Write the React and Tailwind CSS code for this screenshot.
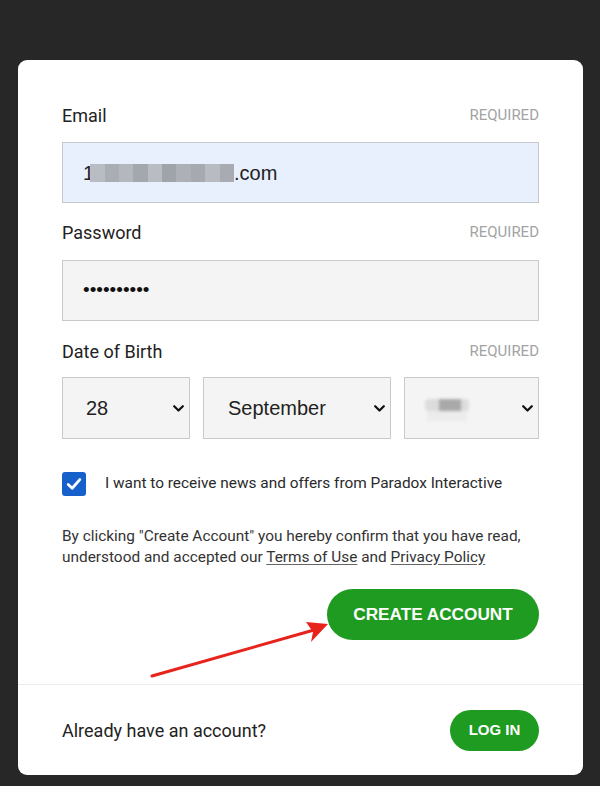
import React from "react";

const Chevron = () => (
  <svg width="11" height="7" viewBox="0 0 11 7" className="shrink-0">
    <path d="M1.2 1.2 L5.5 5.5 L9.8 1.2" fill="none" stroke="#111" strokeWidth="2.2" strokeLinecap="round" strokeLinejoin="round" />
  </svg>
);

function Label({ children }) {
  return (
    <div className="flex h-6 items-center justify-between">
      <span className="text-[18px] text-[#222]">{children}</span>
      <span className="text-[15px] text-[#a3a3a3]">REQUIRED</span>
    </div>
  );
}

export default function App() {
  const blurs = ["#b9bcc2", "#a9adb4", "#b4b7bd", "#a3a7ae", "#b9bcc2", "#9fa3aa", "#adb0b6", "#a6a9b0", "#b8bbc1", "#a8abb1"];
  return (
    <div className="relative min-h-[786px] w-[600px] overflow-hidden bg-[#272727] pt-[60px] font-['Roboto',sans-serif]">
      <div className="ml-[18px] w-[565px] overflow-hidden rounded-[9px] bg-white">
        <div className="px-[44px] pb-[44px] pt-[43px]">
          <Label>Email</Label>
          <div className="mt-[15px] flex h-[61px] items-center border border-[#c6c8cc] bg-[#e8f0fe] pl-[20px] font-['Liberation_Sans',Arial,sans-serif] text-[20px] text-[#222]">
            <span>1</span>
            <span className="-ml-[4px] flex h-[18px] blur-[0.5px]">
              {blurs.map((c, i) => (
                <span key={i} className="h-full w-[14.4px]" style={{ background: c }} />
              ))}
            </span>
            <span>.com</span>
          </div>

          <div className="mt-[17px]">
            <Label>Password</Label>
          </div>
          <div className="mt-[16px] flex h-[61px] items-center border border-[#c9c9c9] bg-[#f4f4f4] pl-[20px] font-['Liberation_Sans',Arial,sans-serif] text-[19px] text-[#111]">
            ••••••••••
          </div>

          <div className="mt-[18px]">
            <Label>Date of Birth</Label>
          </div>
          <div className="mt-[14px] flex h-[62px] gap-[13px] font-['Liberation_Sans',Arial,sans-serif] text-[20px] text-[#222]">
            <div className="flex w-[128px] items-center justify-between border border-[#c9c9c9] bg-[#f4f4f4] pl-[23px] pr-[5px]">
              <span>28</span>
              <Chevron />
            </div>
            <div className="flex w-[188px] items-center justify-between border border-[#c9c9c9] bg-[#f4f4f4] pl-[24px] pr-[5px]">
              <span>September</span>
              <Chevron />
            </div>
            <div className="flex flex-1 items-center justify-between border border-[#c9c9c9] bg-[#f4f4f4] pl-[20px] pr-[5px]">
              <span className="relative block h-[26px] w-[48px] blur-[1.5px]">
                <span className="absolute left-[0px] top-[4px] h-[12px] w-[44px] rounded-[4px] bg-[#dcdcdc]" />
                <span className="absolute left-[14px] top-[4px] h-[12px] w-[22px] bg-[#a9a9a9]" />
                <span className="absolute left-[2px] top-[16px] h-[10px] w-[40px] bg-[#ececec]" />
              </span>
              <Chevron />
            </div>
          </div>

          <div className="mt-[33px] flex items-center">
            <span className="flex h-[24px] w-[24px] items-center justify-center rounded-[3px] bg-[#1660cb]">
              <svg width="16" height="14" viewBox="0 0 16 14">
                <path d="M2.2 7.4 L6.2 11.2 L13.8 2.6" fill="none" stroke="white" strokeWidth="2.8" strokeLinecap="round" strokeLinejoin="round" />
              </svg>
            </span>
            <span className="ml-[19px] text-[15.4px] text-[#2a2a2a]">I want to receive news and offers from Paradox Interactive</span>
          </div>

          <p className="mt-[30px] text-[15.4px] leading-[21px] text-[#333]">
            By clicking "Create Account" you hereby confirm that you have read, understood and accepted our <span className="underline decoration-[#666] underline-offset-2">Terms of Use</span> and <span className="underline decoration-[#666] underline-offset-2">Privacy Policy</span>
          </p>

          <div className="mt-[21px] flex justify-end">
            <button className="flex h-[51px] w-[212px] items-center justify-center rounded-full bg-[#1e9b20] font-['Liberation_Sans',Arial,sans-serif] text-[17.2px] font-bold text-white">
              CREATE ACCOUNT
            </button>
          </div>
        </div>

        <div className="flex h-[91px] items-center justify-between border-t border-[#ececec] px-[44px]">
          <span className="text-[18px] text-[#222]">Already have an account?</span>
          <button className="flex h-[41px] w-[89px] items-center justify-center rounded-full bg-[#1e9b20] font-['Liberation_Sans',Arial,sans-serif] text-[15px] font-bold text-white">
            LOG IN
          </button>
        </div>
      </div>

      <svg className="pointer-events-none absolute left-0 top-0" width="600" height="786">
        <path d="M152 676 L314 630" stroke="#e8231c" strokeWidth="3" strokeLinecap="round" />
        <path d="M328 624 L306 622 L313 632 L311 642 Z" fill="#e8231c" />
      </svg>
    </div>
  );
}
